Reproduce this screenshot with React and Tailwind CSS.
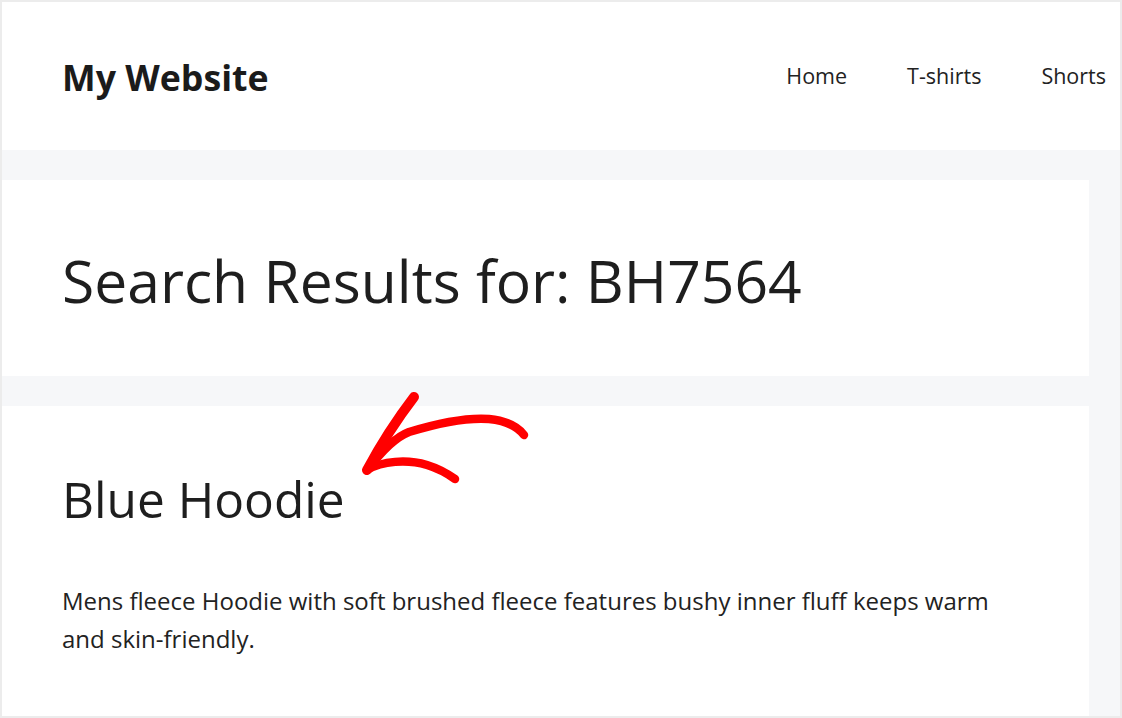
import React from "react";

const links = ["Home", "T-shirts", "Shorts"];

// * hand drawn arrow pointing at the result * //
const Arrow = () => (
  <svg
    className="absolute left-[350px] top-[385px] pointer-events-none"
    width="185"
    height="100"
    viewBox="0 0 185 100"
    fill="none"
    stroke="#ff0000"
    strokeLinecap="round"
    strokeLinejoin="round"
  >
    <path d="M62 10 Q36 44 15 83" strokeWidth="10" />
    <path d="M172 48 C166 40 156 34 137 32 C110 30 80 38 57 45 C44 50 32 62 15 83" strokeWidth="8.5" />
    <path d="M15 83 C30 74 55 72 75 78 C88 82 96 87 103 92" strokeWidth="8.5" />
  </svg>
);

const App = () => {
  return (
    // * main container * //
    <div
      className="relative w-[1122px] h-[718px] overflow-hidden border-2 border-[#ececec] bg-[#f6f7f9] text-[#222]"
      style={{ fontFamily: '"Open Sans", "Noto Sans", sans-serif' }}
    >
      {/* header */}
      <header className="h-[148px] bg-white flex justify-between pl-[60px] pr-[14px]">
        <div className="mt-[54px] text-[35.7px] leading-[43px] font-bold text-[#1b1b1b]">My Website</div>
        <nav className="flex gap-[60px] mt-[58px] text-[21.5px] leading-[32px]">
          {links.map((l) => (
            <a key={l} className="cursor-pointer">
              {l}
            </a>
          ))}
        </nav>
      </header>

      {/* content */}
      <main className="pt-[30px] flex flex-col gap-[30px]">
        <section className="w-[1087px] h-[196px] bg-white pl-[60px] pt-[65px]">
          <h1 className="text-[58.8px] leading-[70px] text-[#1e1e1e]">Search Results for: BH7564</h1>
        </section>

        <section className="w-[1087px] h-[320px] bg-white pl-[60px] pt-[63px]">
          <h2 className="text-[49.6px] leading-[60px] text-[#1e1e1e]">Blue Hoodie</h2>
          <p className="mt-[53px] max-w-[950px] text-[24px] leading-[38px]">
            Mens fleece Hoodie with soft brushed fleece features bushy inner fluff keeps warm and
            skin-friendly.
          </p>
        </section>
      </main>

      <Arrow />
    </div>
  );
};

export default App;
